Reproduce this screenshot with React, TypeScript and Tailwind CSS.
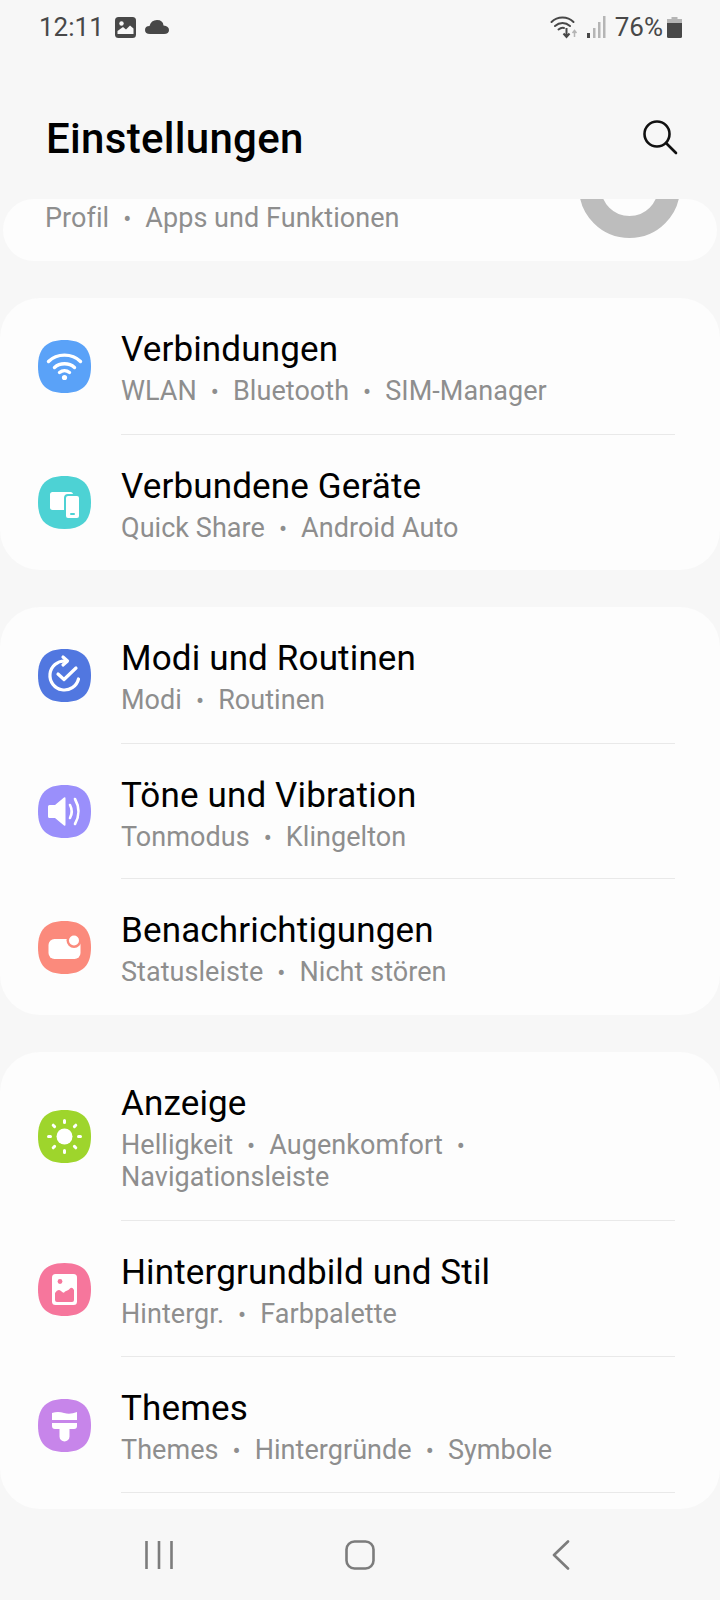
import type { ReactNode } from 'react';

function Squircle({ color, children }: { color: string; children: ReactNode }) {
  return (
    <svg width="53" height="53" viewBox="0 0 53 53" className="shrink-0">
      <path d="M26.5 0C44.5 0 53 8.5 53 26.5S44.5 53 26.5 53 0 44.5 0 26.5 8.5 0 26.5 0Z" fill={color} />
      {children}
    </svg>
  );
}

const icons = {
  wifi: (
    <Squircle color="#5aa2f8">
      <g fill="none" stroke="#fff" strokeWidth="3.4" strokeLinecap="round">
        <path d="M10.5 21.5C19 13 34 13 42.5 21.5" />
        <path d="M16.5 27.5C22 22.5 31 22.5 36.5 27.5" />
        <path d="M21.5 32.5C24.5 30 28.5 30 31.5 32.5" />
      </g>
      <circle cx="26.5" cy="37.5" r="2.6" fill="#fff" />
    </Squircle>
  ),
  devices: (
    <Squircle color="#4dd2d4">
      <rect x="12" y="16" width="23" height="18" rx="2.5" fill="#fff" />
      <rect x="27" y="19" width="15" height="24" rx="3" fill="#fff" stroke="#4dd2d4" strokeWidth="2" />
      <rect x="32" y="37" width="5" height="2" rx="1" fill="#4dd2d4" />
    </Squircle>
  ),
  routines: (
    <Squircle color="#5177e0">
      <g fill="none" stroke="#fff" strokeWidth="3.2" strokeLinecap="round" strokeLinejoin="round">
        <path d="M27 12A14.5 14.5 0 1 0 40.5 30" />
        <path d="M25 8L29.5 12L25 16" />
        <path d="M20 25L26 30.5L38 19" />
      </g>
    </Squircle>
  ),
  sound: (
    <Squircle color="#9a8ffb">
      <path d="M10 21.5Q10 20 11.5 20H17L26 12.5Q27.5 11.5 27.5 13.5V39.5Q27.5 41.5 26 40.5L17 33H11.5Q10 33 10 31.5Z" fill="#fff" />
      <g fill="none" stroke="#fff" strokeWidth="2.6" strokeLinecap="round">
        <path d="M32 20Q35.5 26.5 32 33" />
        <path d="M37 14Q44 26.5 37 39" />
      </g>
    </Squircle>
  ),
  notify: (
    <Squircle color="#fb8a7c">
      <rect x="10.5" y="18" width="32" height="20" rx="6" fill="#fff" />
      <circle cx="36" cy="19.5" r="7.5" fill="#fb8a7c" />
      <circle cx="36" cy="19.5" r="5" fill="#fff" />
    </Squircle>
  ),
  display: (
    <Squircle color="#9ed52c">
      <circle cx="26.5" cy="26.5" r="8" fill="#fff" />
      <g stroke="#fff" strokeWidth="3" strokeLinecap="round">
        <path d="M26.5 10.5V12.5M26.5 40.5V42.5M10.5 26.5H12.5M40.5 26.5H42.5M15.2 15.2L16.6 16.6M36.4 36.4L37.8 37.8M15.2 37.8L16.6 36.4M36.4 16.6L37.8 15.2" />
      </g>
    </Squircle>
  ),
  wallpaper: (
    <Squircle color="#f6769c">
      <rect x="14" y="11" width="25" height="31" rx="3.5" fill="#fff" />
      <circle cx="22" cy="18.5" r="2.4" fill="#f6769c" />
      <path d="M17 37V30Q20 25 23 28T27 28.5Q31 27 32.5 25Q34.5 24 36 27V37Q36 39 34 39H19Q17 39 17 37Z" fill="#f6769c" />
    </Squircle>
  ),
  themes: (
    <Squircle color="#c785ea">
      <path d="M14 14Q20 12 26 14T39 13V21H14Z" fill="#fff" />
      <path d="M14 24H39V27Q39 30 36 30H31.5V37.5A5 5 0 0 1 21.5 37.5V30H17Q14 30 14 27Z" fill="#fff" />
    </Squircle>
  ),
};

type Row = { icon: ReactNode; title: string; lines: string[][]; height: string };

function Sub({ parts }: { parts: string[] }) {
  return (
    <p className="h-[32px] text-[27px] leading-[32px] tracking-[0.05px] text-[#8e8e8e] whitespace-nowrap">
      {parts.map((p, i) => (
        <span key={p}>
          {p}
          {i < parts.length - 1 && <span className="mx-[14px] text-[24px]">•</span>}
        </span>
      ))}
    </p>
  );
}

function SettingsRow({ row, last }: { row: Row; last: boolean }) {
  return (
    <div className={`flex items-center pl-[38px] ${row.height}`}>
      <div className="mr-[30px]">{row.icon}</div>
      <div className={`flex-1 h-full mr-[45px] pt-[31px] ${last ? '' : 'border-b border-[#e9e9e9]'}`}>
        <p className="h-[42px] text-[35px] leading-[42px] tracking-[0.15px] text-black whitespace-nowrap">{row.title}</p>
        <div className="mt-[4px]">
          {row.lines.map((l) => (
            <Sub key={l[0]} parts={l} />
          ))}
        </div>
      </div>
    </div>
  );
}

const groupA: Row[] = [
  { icon: icons.wifi, title: 'Verbindungen', lines: [['WLAN', 'Bluetooth', 'SIM-Manager']], height: 'h-[137px]' },
  { icon: icons.devices, title: 'Verbundene Geräte', lines: [['Quick Share', 'Android Auto']], height: 'h-[135px]' },
];

const groupB: Row[] = [
  { icon: icons.routines, title: 'Modi und Routinen', lines: [['Modi', 'Routinen']], height: 'h-[137px]' },
  { icon: icons.sound, title: 'Töne und Vibration', lines: [['Tonmodus', 'Klingelton']], height: 'h-[135px]' },
  { icon: icons.notify, title: 'Benachrichtigungen', lines: [['Statusleiste', 'Nicht stören']], height: 'h-[136px]' },
];

const groupC: Row[] = [
  { icon: icons.display, title: 'Anzeige', lines: [['Helligkeit', 'Augenkomfort', ''], ['Navigationsleiste']], height: 'h-[169px]' },
  { icon: icons.wallpaper, title: 'Hintergrundbild und Stil', lines: [['Hintergr.', 'Farbpalette']], height: 'h-[136px]' },
  { icon: icons.themes, title: 'Themes', lines: [['Themes', 'Hintergründe', 'Symbole']], height: 'h-[136px]' },
];

export default function App() {
  return (
    <div className="h-[1600px] w-[720px] overflow-hidden bg-[#f7f7f7] flex flex-col font-['Roboto',sans-serif]">
      {/* Status bar */}
      <div className="h-[54px] flex items-center justify-between pl-[39px] pr-[38px] text-[#484848]">
        <div className="flex items-center">
          <span className="text-[26px] leading-none">12:11</span>
          <svg width="21" height="21" viewBox="0 0 21 21" className="ml-[11px]">
            <rect width="21" height="21" rx="3.5" fill="#484848" />
            <circle cx="6.5" cy="6.5" r="2.2" fill="#f7f7f7" />
            <path d="M2.5 17V14L8 10L11 12.5L15 8.5L18.5 11.5V17Z" fill="#f7f7f7" />
          </svg>
          <svg width="24" height="16" viewBox="0 0 24 16" className="ml-[9px]">
            <path d="M5 15Q0 15 0 11T4.5 7Q6 1 12 1T18.5 6.5Q24 7 24 11T19 15Z" fill="#484848" />
          </svg>
        </div>
        <div className="flex items-center">
          <svg width="32" height="26" viewBox="0 0 29 26">
            <g fill="none" stroke="#484848" strokeWidth="2" strokeLinecap="round">
              <path d="M1 8C7 2 17 2 23 8" />
              <path d="M4.5 12C9 8 15 8 19.5 12" />
              <path d="M8 15.5C10.5 13.5 12 13.5 13.5 14" />
            </g>
            <path d="M16 14V22M13 19.5L16 23L19 19.5" fill="none" stroke="#484848" strokeWidth="2" />
            <path d="M24 23V17M22 19L24 16.5L26 19" fill="none" stroke="#b5b5b5" strokeWidth="1.5" />
          </svg>
          <svg width="20" height="24" viewBox="0 0 20 24" className="ml-[5px]">
            <rect x="1" y="18" width="3" height="5" fill="#484848" />
            <rect x="7" y="13" width="2.5" height="10" fill="#b5b5b5" />
            <rect x="12" y="7" width="2.5" height="16" fill="#b5b5b5" />
            <rect x="17" y="1" width="2.5" height="22" fill="#b5b5b5" />
          </svg>
          <span className="ml-[9px] mr-[4px] text-[26px] leading-none">76%</span>
          <svg width="15" height="21" viewBox="0 0 15 21">
            <path d="M4.5 0H10.5V2H15V8H0V2H4.5Z" fill="#b5b5b5" />
            <path d="M0 6H15V19.5Q15 21 13.5 21H1.5Q0 21 0 19.5Z" fill="#484848" />
          </svg>
        </div>
      </div>

      {/* Title bar */}
      <div className="h-[145px] flex items-center justify-between pl-[46px] pr-[42px]">
        <h1 className="text-[42px] font-medium tracking-[0.3px] text-black leading-none mt-[24px]">Einstellungen</h1>
        <svg width="36" height="36" viewBox="0 0 36 36" fill="none" stroke="#111" strokeWidth="2.6" strokeLinecap="round" className="mt-[20px]">
          <circle cx="15" cy="15" r="12.5" />
          <path d="M24.5 24.5L34 34" />
        </svg>
      </div>

      {/* Scrolled list */}
      <div className="flex-1 overflow-hidden flex flex-col">
        <div className="relative shrink-0 mx-[3px] h-[62px] rounded-[40px] bg-[#fdfdfd] overflow-hidden pl-[42px] pt-[3px]">
          <Sub parts={['Profil', 'Apps und Funktionen']} />
          <div className="absolute left-[576px] top-[-62px] h-[101px] w-[101px] rounded-full border-[22px] border-[#bdbdbd]" />
        </div>
        <div className="mt-[37px] shrink-0 rounded-[40px] bg-[#fdfdfd] overflow-hidden">
          {groupA.map((r, i) => (
            <SettingsRow key={r.title} row={r} last={i === groupA.length - 1} />
          ))}
        </div>
        <div className="mt-[37px] shrink-0 rounded-[40px] bg-[#fdfdfd] overflow-hidden">
          {groupB.map((r, i) => (
            <SettingsRow key={r.title} row={r} last={i === groupB.length - 1} />
          ))}
        </div>
        <div className="mt-[37px] shrink-0 h-[457px] rounded-[40px] bg-[#fdfdfd] overflow-hidden">
          {groupC.map((r) => (
            <SettingsRow key={r.title} row={r} last={false} />
          ))}
        </div>
      </div>

      {/* Navigation bar */}
      <div className="h-[91px] shrink-0 flex justify-center items-start gap-[161px] pt-[31px]">
        <svg width="40" height="30" viewBox="0 0 40 30" fill="none" stroke="#7c7c7c" strokeWidth="2.6">
          <path d="M7.5 1V29M20 1V29M32.5 1V29" />
        </svg>
        <svg width="40" height="30" viewBox="0 0 40 30" fill="none" stroke="#7c7c7c" strokeWidth="2.6">
          <rect x="6.5" y="1.5" width="27" height="27" rx="8" />
        </svg>
        <svg width="40" height="30" viewBox="0 0 40 30" fill="none" stroke="#7c7c7c" strokeWidth="2.6" strokeLinecap="round" strokeLinejoin="round">
          <path d="M27 1.5L13 15L27 28.5" />
        </svg>
      </div>
    </div>
  );
}
